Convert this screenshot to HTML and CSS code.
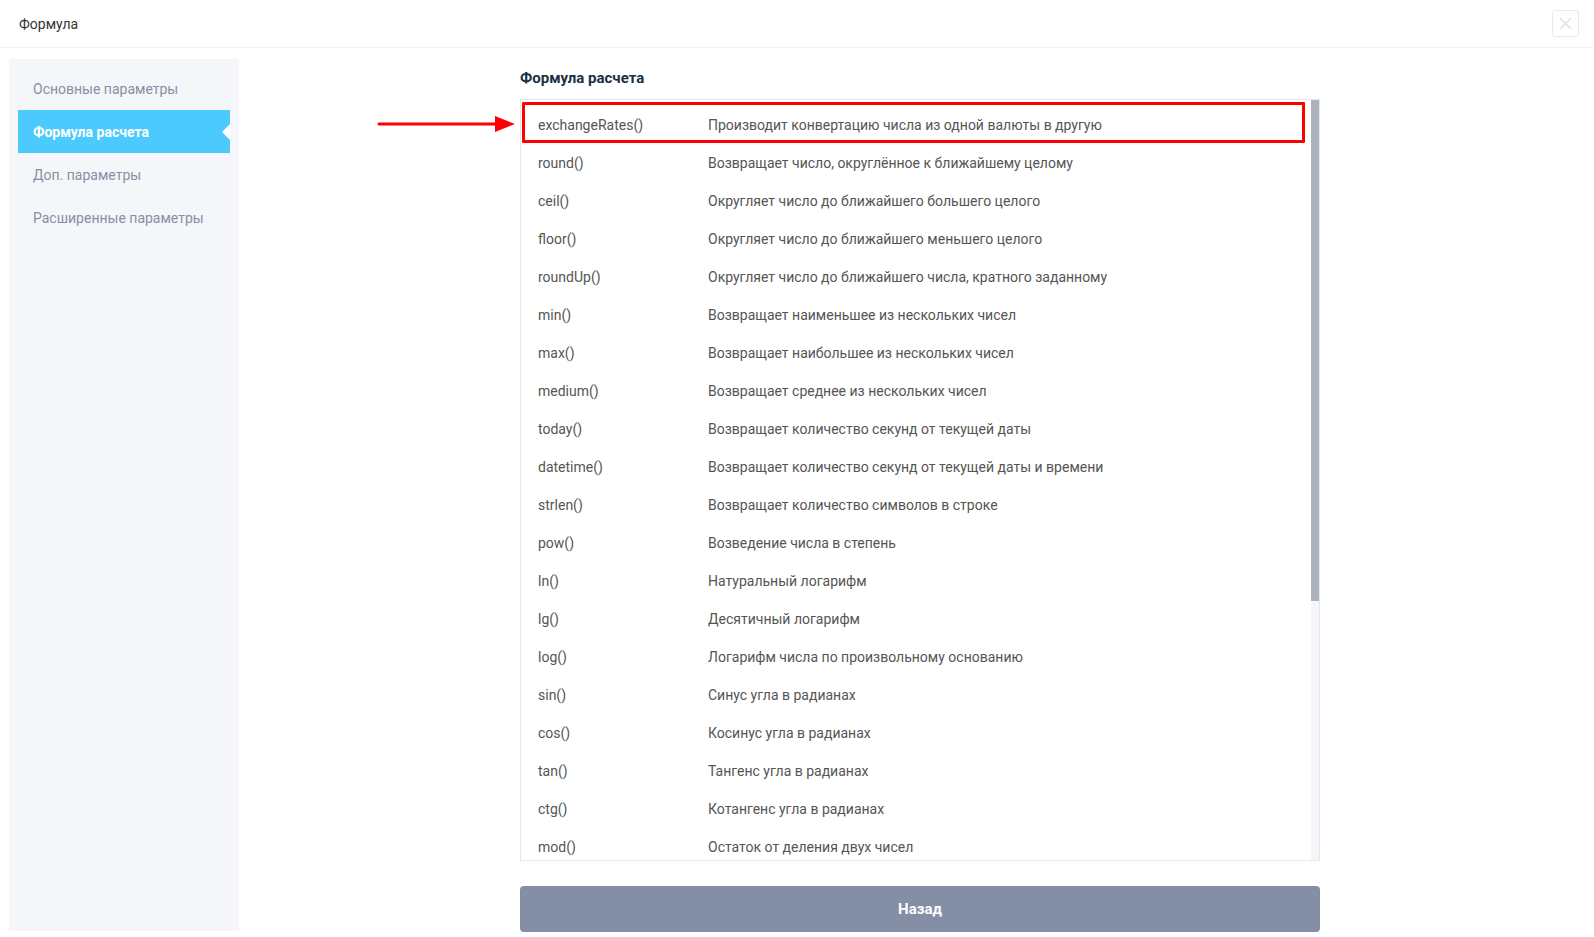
FILE: index.html
```html
<!DOCTYPE html>
<html lang="ru">
<head>
    <meta charset="UTF-8">
    <meta name="viewport" content="width=device-width, initial-scale=1.0">
    <title>Формула</title>
    <link rel="stylesheet" href="styles.css">
</head>
<body>
    <div class="modal">
        <div class="modal-header">
            <div class="modal-title">Формула</div>
            <button class="close-btn" type="button">
                <svg width="13" height="13" viewBox="0 0 13 13"><path d="M1 1L12 12M12 1L1 12" stroke="#dcdde0" stroke-width="1.2" fill="none"/></svg>
            </button>
        </div>

        <div class="modal-body">
            <div class="sidebar">
                <div class="nav-item">Основные параметры</div>
                <div class="nav-item active">Формула расчета</div>
                <div class="nav-item">Доп. параметры</div>
                <div class="nav-item">Расширенные параметры</div>
            </div>

            <div class="content">
                <div class="section-title">Формула расчета</div>

                <div class="list-wrap">
                    <svg class="pointer-arrow" width="140" height="20" viewBox="0 0 140 20">
                        <line x1="3" y1="10" x2="122" y2="10" stroke="#ff0000" stroke-width="3" stroke-linecap="round"/>
                        <polygon points="119,2 139,10 119,18" fill="#ff0000"/>
                    </svg>
                    <div class="func-list">
                        <div class="func-rows">
                            <div class="func-row highlighted">
                                <div class="func-name">exchangeRates()</div>
                                <div class="func-desc">Производит конвертацию числа из одной валюты в другую</div>
                            </div>
                            <div class="func-row">
                                <div class="func-name">round()</div>
                                <div class="func-desc">Возвращает число, округлённое к ближайшему целому</div>
                            </div>
                            <div class="func-row">
                                <div class="func-name">ceil()</div>
                                <div class="func-desc">Округляет число до ближайшего большего целого</div>
                            </div>
                            <div class="func-row">
                                <div class="func-name">floor()</div>
                                <div class="func-desc">Округляет число до ближайшего меньшего целого</div>
                            </div>
                            <div class="func-row">
                                <div class="func-name">roundUp()</div>
                                <div class="func-desc">Округляет число до ближайшего числа, кратного заданному</div>
                            </div>
                            <div class="func-row">
                                <div class="func-name">min()</div>
                                <div class="func-desc">Возвращает наименьшее из нескольких чисел</div>
                            </div>
                            <div class="func-row">
                                <div class="func-name">max()</div>
                                <div class="func-desc">Возвращает наибольшее из нескольких чисел</div>
                            </div>
                            <div class="func-row">
                                <div class="func-name">medium()</div>
                                <div class="func-desc">Возвращает среднее из нескольких чисел</div>
                            </div>
                            <div class="func-row">
                                <div class="func-name">today()</div>
                                <div class="func-desc">Возвращает количество секунд от текущей даты</div>
                            </div>
                            <div class="func-row">
                                <div class="func-name">datetime()</div>
                                <div class="func-desc">Возвращает количество секунд от текущей даты и времени</div>
                            </div>
                            <div class="func-row">
                                <div class="func-name">strlen()</div>
                                <div class="func-desc">Возвращает количество символов в строке</div>
                            </div>
                            <div class="func-row">
                                <div class="func-name">pow()</div>
                                <div class="func-desc">Возведение числа в степень</div>
                            </div>
                            <div class="func-row">
                                <div class="func-name">ln()</div>
                                <div class="func-desc">Натуральный логарифм</div>
                            </div>
                            <div class="func-row">
                                <div class="func-name">lg()</div>
                                <div class="func-desc">Десятичный логарифм</div>
                            </div>
                            <div class="func-row">
                                <div class="func-name">log()</div>
                                <div class="func-desc">Логарифм числа по произвольному основанию</div>
                            </div>
                            <div class="func-row">
                                <div class="func-name">sin()</div>
                                <div class="func-desc">Синус угла в радианах</div>
                            </div>
                            <div class="func-row">
                                <div class="func-name">cos()</div>
                                <div class="func-desc">Косинус угла в радианах</div>
                            </div>
                            <div class="func-row">
                                <div class="func-name">tan()</div>
                                <div class="func-desc">Тангенс угла в радианах</div>
                            </div>
                            <div class="func-row">
                                <div class="func-name">ctg()</div>
                                <div class="func-desc">Котангенс угла в радианах</div>
                            </div>
                            <div class="func-row">
                                <div class="func-name">mod()</div>
                                <div class="func-desc">Остаток от деления двух чисел</div>
                            </div>
                        </div>
                        <div class="scrollbar">
                            <div class="scroll-thumb"></div>
                        </div>
                    </div>
                </div>

                <button class="back-btn" type="button">Назад</button>
            </div>
        </div>
    </div>
</body>
</html>
```

FILE: styles.css
```css
body {
    margin: 0;
    font-family: Roboto, 'Noto Sans', Arial, sans-serif;
    background-color: #ffffff;
    color: #333333;
    overflow: hidden;
}

.modal {
    width: 1594px;
    height: 937px;
}

.modal-header {
    height: 47px;
    border-bottom: 1px solid #f0f2f7;
    display: flex;
    align-items: center;
    justify-content: space-between;
    padding: 0 15px 0 19px;
}

.modal-title {
    font-size: 14px;
    color: #333333;
}

.close-btn {
    width: 27px;
    height: 27px;
    border: 1px solid #e9e9ec;
    border-radius: 3px;
    background: #ffffff;
    padding: 0;
    display: flex;
    align-items: center;
    justify-content: center;
    margin-top: -1px;
}

.modal-body {
    display: flex;
    padding: 11px 0 0 9px;
    height: 872px;
}

.sidebar {
    width: 230px;
    background-color: #f4f6fa;
    padding: 8px 9px 0 9px;
    box-sizing: border-box;
    flex-shrink: 0;
}

.nav-item {
    height: 43px;
    display: flex;
    align-items: center;
    padding-left: 15px;
    font-size: 14px;
    color: #8a8fa1;
    position: relative;
}

.nav-item.active {
    background-color: #4ccafd;
    color: #ffffff;
    font-weight: bold;
}

.nav-item.active::after {
    content: '';
    position: absolute;
    right: 0;
    top: 50%;
    margin-top: -8px;
    border-top: 8px solid transparent;
    border-bottom: 8px solid transparent;
    border-right: 8px solid #ffffff;
}

.content {
    margin-left: 281px;
    width: 800px;
}

.section-title {
    font-size: 15px;
    font-weight: bold;
    color: #1a2e44;
    margin-top: 10px;
    height: 19px;
    line-height: 19px;
    margin-bottom: 11px;
}

.list-wrap {
    position: relative;
}

.pointer-arrow {
    position: absolute;
    left: -144px;
    top: 15px;
}

.func-list {
    border: 1px solid #e4e7ee;
    height: 762px;
    box-sizing: border-box;
    display: flex;
    overflow: hidden;
}

.func-rows {
    flex: 1;
    padding-top: 6px;
    overflow: hidden;
}

.scrollbar {
    width: 8px;
    margin-left: 1px;
    background-color: #f4f6fa;
    flex-shrink: 0;
}

.scroll-thumb {
    height: 501px;
    background-color: #adb2be;
}

.func-row {
    display: flex;
    height: 38px;
    align-items: center;
    padding-left: 17px;
    font-size: 14px;
    color: #555555;
    position: relative;
}

.func-name {
    width: 170px;
    flex-shrink: 0;
}

.highlighted::after {
    content: '';
    position: absolute;
    left: 1px;
    right: 5px;
    top: -4px;
    bottom: 1px;
    border: 3px solid #ff0000;
    border-radius: 1px;
}

.back-btn {
    display: block;
    width: 100%;
    height: 46px;
    margin-top: 25px;
    border: none;
    border-radius: 4px;
    background-color: #848ea5;
    color: #ffffff;
    font-family: Roboto, 'Noto Sans', Arial, sans-serif;
    font-size: 15px;
    font-weight: bold;
    cursor: pointer;
}
```
